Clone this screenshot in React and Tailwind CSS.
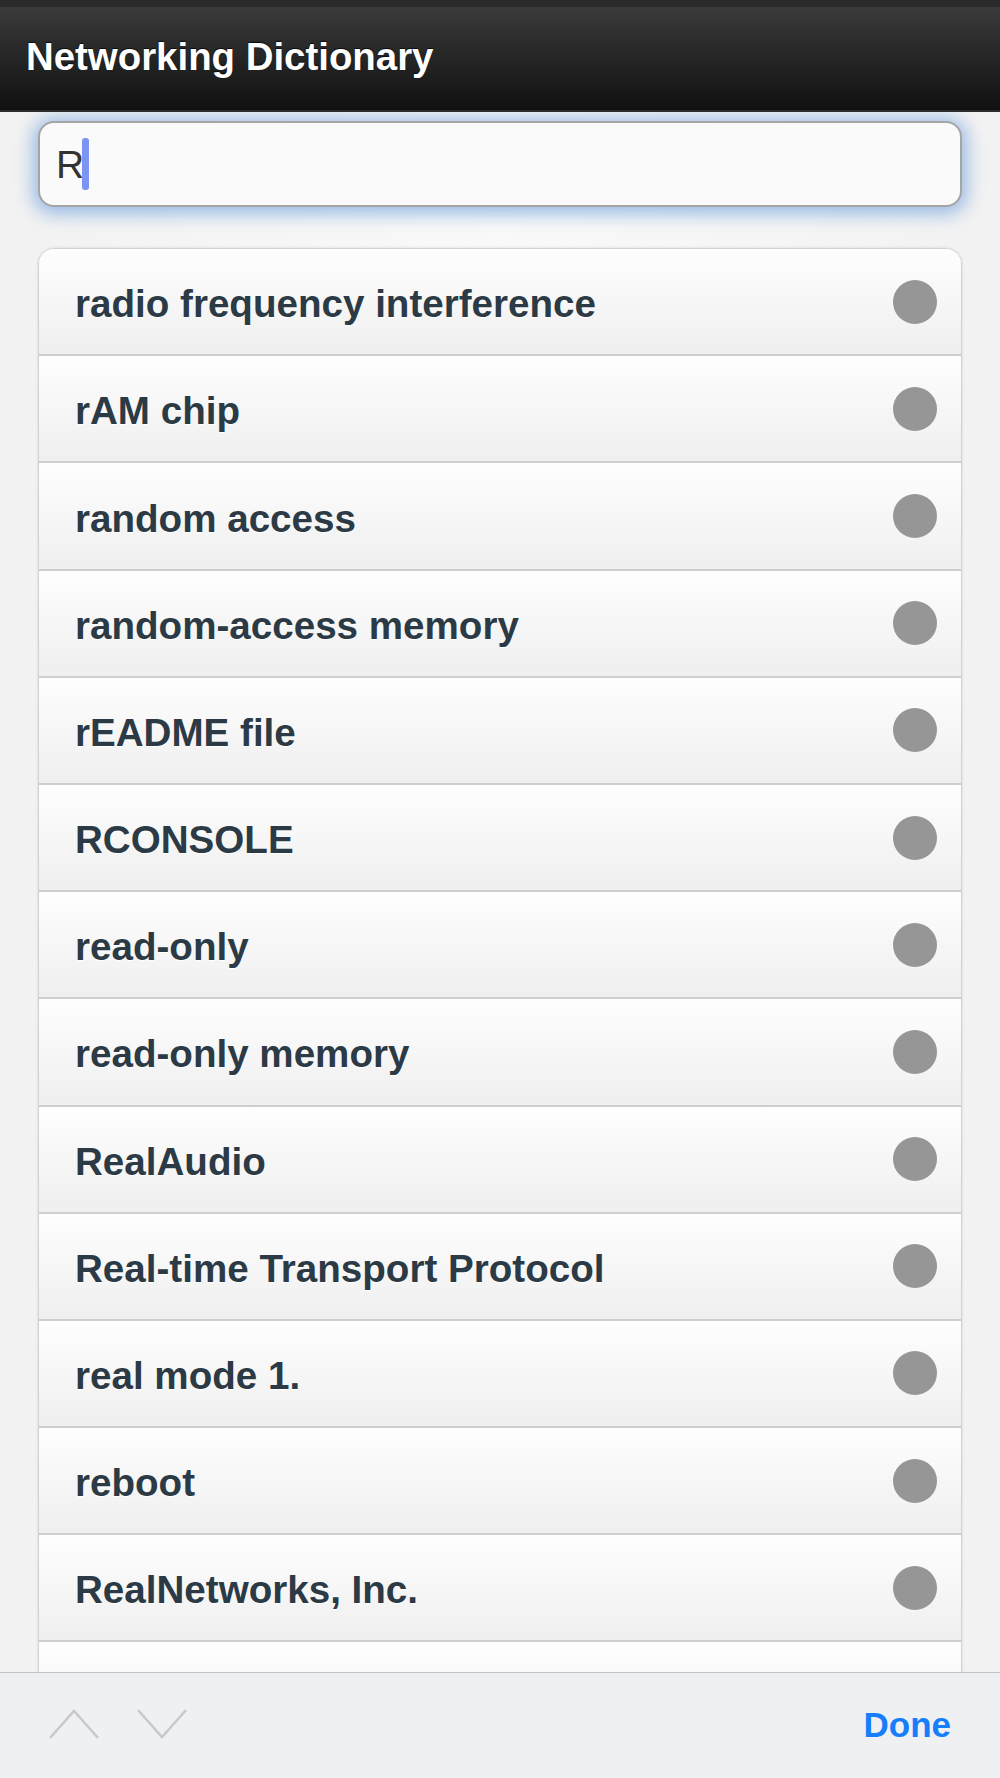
const terms = [
  'radio frequency interference',
  'rAM chip',
  'random access',
  'random-access memory',
  'rEADME file',
  'RCONSOLE',
  'read-only',
  'read-only memory',
  'RealAudio',
  'Real-time Transport Protocol',
  'real mode 1.',
  'reboot',
  'RealNetworks, Inc.',
  '',
];

function Chevron({ up }) {
  return (
    <svg width="50" height="30" viewBox="0 0 50 30" fill="none">
      <path
        d={up ? 'M1 29 L25 2 L49 29' : 'M1 1 L25 28 L49 1'}
        stroke="#c9c9cb"
        strokeWidth="2.5"
      />
    </svg>
  );
}

export default function App() {
  return (
    <div className="h-[1778px] w-[1000px] flex flex-col overflow-hidden bg-[#f7f7f7] font-['Liberation_Sans',Arial,sans-serif]">
      <header className="h-[112px] shrink-0 flex items-center px-[26px] bg-gradient-to-b from-[#3b3b3b] to-[#111111] border-t-[7px] border-t-[#2a2a2a] border-b-2 border-b-[#2c2c2c]">
        <h1 className="text-[38.4px] font-bold text-white [text-shadow:0_-1px_1px_rgba(0,0,0,0.8)] -mt-1">
          Networking Dictionary
        </h1>
      </header>

      <main className="flex-1 overflow-hidden px-[38px] pt-[9px] bg-gradient-to-r from-[#f2f2f2] via-[#f9f9f9] to-[#f2f2f2]">
        <div className="h-[86px] rounded-[16px] border-2 border-[#a5a5a5] bg-[#fafafa] shadow-[0_2px_18px_5px_rgba(105,155,220,0.65)] flex items-center pl-[16px]">
          <span className="text-[39px] text-[#333] leading-none">R</span>
          <span className="w-[7px] h-[52px] rounded-[3px] bg-[#7c95f3] -ml-[2px]" />
        </div>

        <ul className="mt-[41px] rounded-t-[16px] border border-[#d2d2d2] shadow-[0_0_3px_rgba(0,0,0,0.12)] overflow-hidden">
          {terms.map((t, i) => (
            <li
              key={i}
              className="h-[107.2px] shrink-0 flex items-center justify-between pl-[36px] pr-[24px] bg-gradient-to-b from-[#fefefe] to-[#efefef] border-b-2 border-[#cfcfcf]"
            >
              <span className="text-[38.6px] font-bold text-[#2b3a45] mt-[5px] [text-shadow:0_1px_0_#ffffff]">
                {t}
              </span>
              <span className="w-[44px] h-[44px] rounded-full bg-[#969696]" />
            </li>
          ))}
        </ul>
      </main>

      <footer className="h-[106px] shrink-0 flex items-center justify-between bg-[#eff0f2] border-t border-[#c4c4c6] pl-[49px] pr-[49px]">
        <div className="flex items-center gap-[38px] -mt-[3px]">
          <Chevron up />
          <Chevron />
        </div>
        <span className="text-[35px] font-bold text-[#167efb] -mt-[1px]">Done</span>
      </footer>
    </div>
  );
}
